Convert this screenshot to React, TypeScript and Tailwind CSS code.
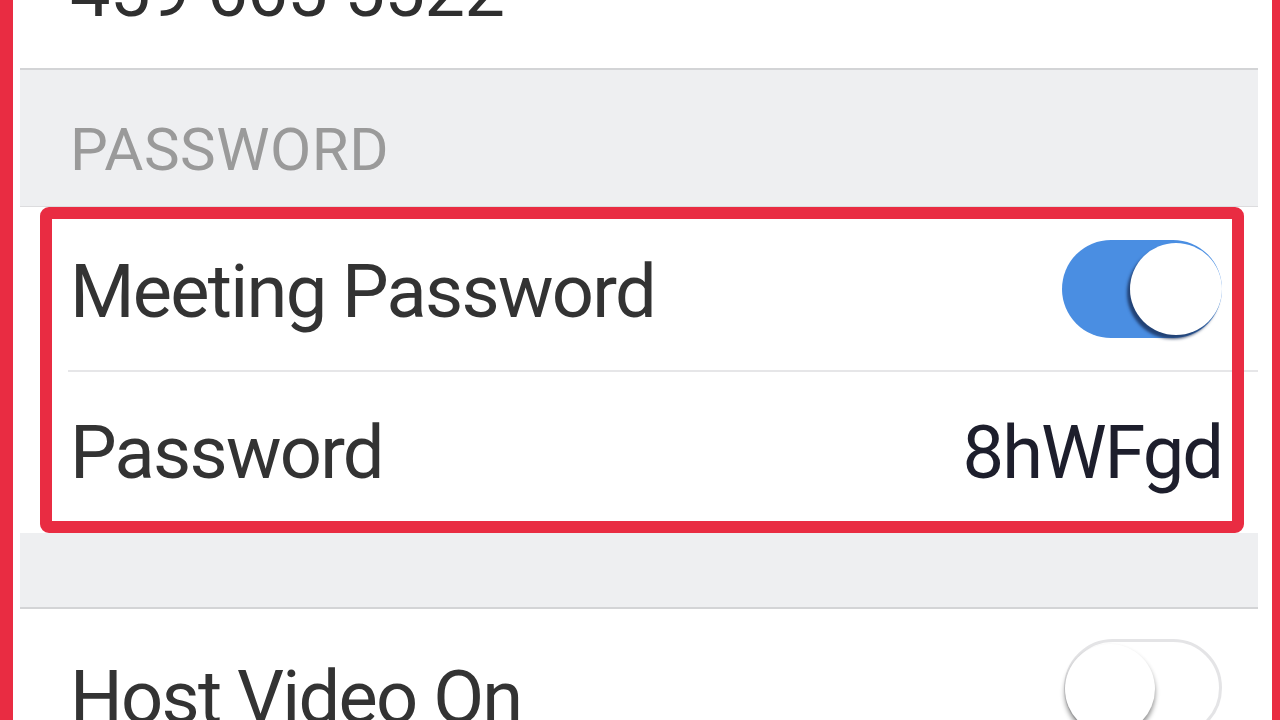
import React from "react";

const Toggle = ({ on }: { on: boolean }) =>
  on ? (
    <div className="relative w-[160px] h-[98px] rounded-full bg-[#4a8ee2]">
      <div className="absolute right-0 top-[3px] w-[92px] h-[92px] rounded-full bg-white shadow-[-3px_4px_3px_rgba(20,40,80,0.75)]" />
    </div>
  ) : (
    <div className="relative w-[158px] h-[98px] rounded-full bg-white border-[3px] border-[#e4e4e6]">
      <div className="absolute left-[-2px] top-[2px] w-[90px] h-[90px] rounded-full bg-white shadow-[0px_4px_5px_rgba(0,0,0,0.45)]" />
    </div>
  );

export default function App() {
  return (
    <div
      className="w-[1280px] h-[720px] overflow-hidden bg-white flex"
      style={{ fontFamily: "Roboto, 'Noto Sans', sans-serif" }}
    >
      <div className="w-[13px] bg-[#e92c42]" />
      <div className="w-[7px]" />

      <div className="w-[1238px] flex flex-col">
        {/* phone number row, scrolled mostly off */}
        <div className="shrink-0 h-[68px] bg-white overflow-hidden flex flex-col justify-end pl-[50px]">
          <p className="text-[72px] leading-none text-[#2f2f2f] tracking-[-0.5px] mb-[40px]">459 665 5522</p>
        </div>
        <div className="shrink-0 h-[2px] bg-[#d3d4d6]" />

        {/* section header */}
        <div className="shrink-0 h-[137px] bg-[#eeeff1] pl-[50px] pt-[50px] border-b border-[#dcdcde]">
          <p className="text-[60px] leading-none text-[#9a9a9a] tracking-[0.5px]">PASSWORD</p>
        </div>

        {/* password group */}
        <div className="shrink-0 relative h-[326px] bg-white">
          <div className="h-[163px] flex items-center justify-between pl-[50px] pr-[36px]">
            <span className="text-[74px] leading-none text-[#333333] tracking-[-1.75px] mt-[6px]">Meeting Password</span>
            <Toggle on />
          </div>
          <div className="ml-[48px] h-[2px] bg-[#e6e6e8]" />
          <div className="h-[161px] flex items-center justify-between pl-[50px] pr-[36px]">
            <span className="text-[74px] leading-none text-[#333333] tracking-[-1.75px]">Password</span>
            <span className="text-[74px] leading-none text-[#1d1e2c] tracking-[-2px]">8hWFgd</span>
          </div>
          {/* highlight annotation */}
          <div className="absolute left-[20px] right-[14px] top-0 bottom-0 border-[12px] border-[#e92c42] rounded-[9px]" />
        </div>

        <div className="shrink-0 h-[74px] bg-[#eeeff1]" />
        <div className="shrink-0 h-[2px] bg-[#d3d4d6]" />

        <div className="flex-1 bg-white flex items-start justify-between pl-[50px] pr-[36px] pt-[30px]">
          <span className="text-[74px] leading-none text-[#333333] tracking-[-1.75px] mt-[22px]">Host Video On</span>
          <Toggle on={false} />
        </div>
      </div>

      <div className="w-[14px]" />
      <div className="w-[8px] bg-[#e92c42]" />
    </div>
  );
}
